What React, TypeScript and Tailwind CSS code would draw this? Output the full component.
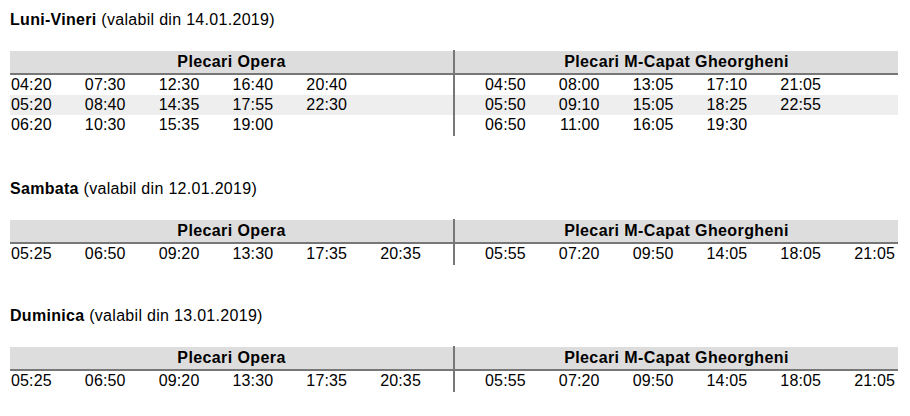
import React from 'react';

type Schedule = {
  day: string;
  valid: string;
  opera: string[][];
  capat: string[][];
  spacing: string;
};

const schedules: Schedule[] = [
  {
    day: 'Luni-Vineri',
    valid: '14.01.2019',
    spacing: 'mt-[10px]',
    opera: [
      ['04:20', '07:30', '12:30', '16:40', '20:40', ''],
      ['05:20', '08:40', '14:35', '17:55', '22:30', ''],
      ['06:20', '10:30', '15:35', '19:00', '', ''],
    ],
    capat: [
      ['04:50', '08:00', '13:05', '17:10', '21:05', ''],
      ['05:50', '09:10', '15:05', '18:25', '22:55', ''],
      ['06:50', '11:00', '16:05', '19:30', '', ''],
    ],
  },
  {
    day: 'Sambata',
    valid: '12.01.2019',
    spacing: 'mt-[43px]',
    opera: [['05:25', '06:50', '09:20', '13:30', '17:35', '20:35']],
    capat: [['05:55', '07:20', '09:50', '14:05', '18:05', '21:05']],
  },
  {
    day: 'Duminica',
    valid: '13.01.2019',
    spacing: 'mt-[41px]',
    opera: [['05:25', '06:50', '09:20', '13:30', '17:35', '20:35']],
    capat: [['05:55', '07:20', '09:50', '14:05', '18:05', '21:05']],
  },
];

const Half = ({ title, rows, align }: { title: string; rows: string[][]; align: 'left' | 'right' }) => (
  <div className="flex-1 py-px">
    <div className="h-[22px] bg-[#dddddd] text-center font-bold leading-[22px] tracking-[0.4px]">{title}</div>
    <div className="h-[2px] bg-[#777777]"></div>
    {rows.map((row, i) => (
      <div key={i} className={`grid grid-cols-6 h-5 leading-5 tracking-[0.15px] ${i % 2 === 1 ? 'bg-[#eeeeee]' : ''}`}>
        {row.map((t, j) => (
          <div key={j} className={align === 'left' ? 'pl-px text-left' : 'pr-[3px] text-right'}>
            {t}
          </div>
        ))}
      </div>
    ))}
  </div>
);

export default function App() {
  return (
    <div className="w-[910px] h-[416px] bg-white text-black text-base overflow-hidden font-['Liberation_Sans',Arial,sans-serif]">
      {schedules.map((s) => (
        <section key={s.day} className={`${s.spacing} ml-[10px] w-[888px]`}>
          <p className="leading-5 mb-5 tracking-[0.3px]">
            <span className="font-bold">{s.day}</span> (valabil din {s.valid})
          </p>
          <div className="flex">
            <Half title="Plecari Opera" rows={s.opera} align="left" />
            <div className="w-[2px] bg-[#777777]"></div>
            <Half title="Plecari M-Capat Gheorgheni" rows={s.capat} align="right" />
          </div>
        </section>
      ))}
    </div>
  );
}
